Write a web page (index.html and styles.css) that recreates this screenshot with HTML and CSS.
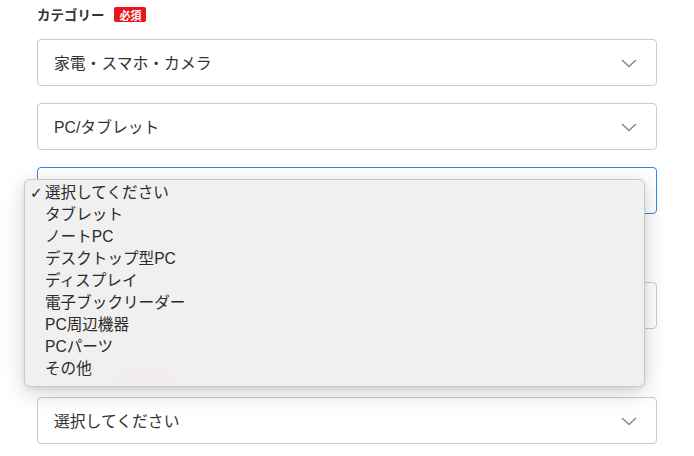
FILE: index.html
```html
<!DOCTYPE html>
<html lang="ja">
<head>
<meta charset="utf-8">
<link rel="stylesheet" href="styles.css">
</head>
<body>
<form class="form">
  <div class="field">
    <div class="label">カテゴリー<span class="badge">必須</span></div>
    <div class="select-stack">
      <div class="select"><span>家電・スマホ・カメラ</span><svg class="chev" viewBox="0 0 16 9" width="16" height="9"><path d="M1 1 L8 7.5 L15 1" fill="none" stroke="#8a8a8a" stroke-width="1.5"/></svg></div>
      <div class="select"><span>PC/タブレット</span><svg class="chev" viewBox="0 0 16 9" width="16" height="9"><path d="M1 1 L8 7.5 L15 1" fill="none" stroke="#8a8a8a" stroke-width="1.5"/></svg></div>
      <div class="select focused"><span></span><svg class="chev" viewBox="0 0 16 9" width="16" height="9"><path d="M1 1 L8 7.5 L15 1" fill="none" stroke="#8a8a8a" stroke-width="1.5"/></svg></div>
    </div>
  </div>
  <div class="field">
    <div class="label"></div>
    <div class="select"><span></span><svg class="chev" viewBox="0 0 16 9" width="16" height="9"><path d="M1 1 L8 7.5 L15 1" fill="none" stroke="#8a8a8a" stroke-width="1.5"/></svg></div>
  </div>
  <div class="field">
    <div class="label"></div>
    <div class="select"><span>選択してください</span><svg class="chev" viewBox="0 0 16 9" width="16" height="9"><path d="M1 1 L8 7.5 L15 1" fill="none" stroke="#8a8a8a" stroke-width="1.5"/></svg></div>
  </div>

  <ul class="menu">
    <li class="checked"><span class="check">✓</span>選択してください</li>
    <li>タブレット</li>
    <li>ノートPC</li>
    <li>デスクトップ型PC</li>
    <li>ディスプレイ</li>
    <li>電子ブックリーダー</li>
    <li>PC周辺機器</li>
    <li>PCパーツ</li>
    <li>その他</li>
  </ul>
</form>
</body>
</html>
```

FILE: styles.css
```css
* { box-sizing: border-box; }
html, body { margin: 0; padding: 0; background: #fff; }
body {
  font-family: "Liberation Sans", "Noto Sans CJK JP", sans-serif;
  color: #333;
  width: 694px;
  height: 456px;
  overflow: hidden;
}
.form {
  position: relative;
  padding: 4px 37px 0 37px;
  display: flex;
  flex-direction: column;
  gap: 33px;
}
.field {
  display: flex;
  flex-direction: column;
  gap: 15px;
}
.label {
  display: flex;
  align-items: center;
  height: 20px;
  font-size: 13.4px;
  font-weight: bold;
  color: #333;
  letter-spacing: 0.1px;
}
.badge {
  display: inline-flex;
  align-items: center;
  justify-content: center;
  margin-left: 10px;
  width: 32px;
  height: 15px;
  margin-top: 1px;
  background: #e8161c;
  color: #fff;
  font-size: 11px;
  font-weight: bold;
  border-radius: 2px;
  letter-spacing: 0;
}
.select-stack {
  display: flex;
  flex-direction: column;
  gap: 17px;
}
.select {
  height: 47px;
  border: 1px solid #cbcbcb;
  border-radius: 4px;
  background: #fff;
  display: flex;
  align-items: center;
  justify-content: space-between;
  padding: 0 19px 0 16px;
  font-size: 15.8px;
  color: #333;
}
.select.focused {
  border-color: #2f8ae6;
}
.chev { display: block; margin-top: 1px; }

.menu {
  position: absolute;
  left: 24px;
  top: 179px;
  width: 621px;
  height: 208px;
  margin: 0;
  padding: 2px 0 0 0;
  list-style: none;
  background:
    radial-gradient(ellipse 55px 25px at 120px 200px, rgba(246, 228, 228, 0.35), rgba(240, 240, 240, 0) 100%),
    #f0f0f0;
  border: 1px solid #c9c9c9;
  border-radius: 6px;
  box-shadow: 0 6px 22px rgba(0, 0, 0, 0.18), 0 1px 4px rgba(0, 0, 0, 0.08);
}
.menu li {
  position: relative;
  height: 22px;
  line-height: 22px;
  padding-left: 20px;
  font-size: 15.6px;
  color: #2a2a2a;
}
.check {
  position: absolute;
  left: 5px;
  top: 0;
  font-family: "DejaVu Sans", sans-serif;
  font-size: 15px;
  font-weight: bold;
  color: #222;
}
```
